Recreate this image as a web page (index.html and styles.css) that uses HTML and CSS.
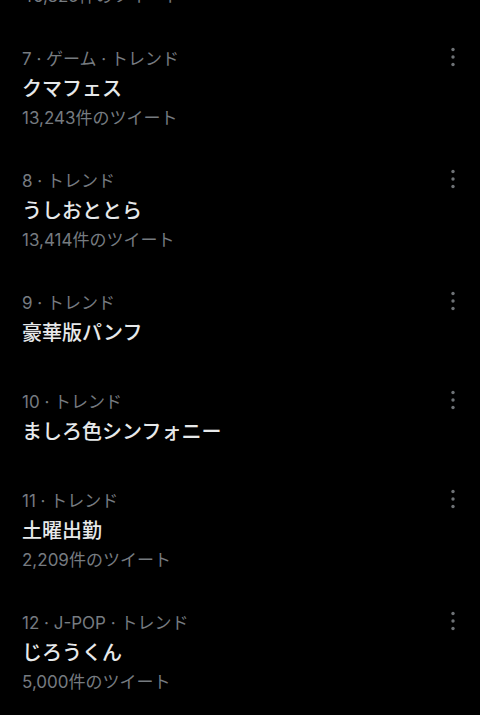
FILE: index.html
```html
<!DOCTYPE html>
<html lang="ja">
<head>
<meta charset="utf-8">
<link rel="stylesheet" href="styles.css">
</head>
<body>
<main class="list">
  <section class="trend">
    <div class="meta"><span>6 · トレンド</span><span class="more"></span></div>
    <div class="title">コミケ</div>
    <div class="count">46,825件のツイート</div>
  </section>
  <section class="trend">
    <div class="meta"><span>7 · ゲーム · トレンド</span><svg class="more" viewBox="0 0 20 20" width="20" height="20"><circle cx="10" cy="2.5" r="1.7"/><circle cx="10" cy="10" r="1.7"/><circle cx="10" cy="17.5" r="1.7"/></svg></div>
    <div class="title">クマフェス</div>
    <div class="count">13,243件のツイート</div>
  </section>
  <section class="trend">
    <div class="meta"><span>8 · トレンド</span><svg class="more" viewBox="0 0 20 20" width="20" height="20"><circle cx="10" cy="2.5" r="1.7"/><circle cx="10" cy="10" r="1.7"/><circle cx="10" cy="17.5" r="1.7"/></svg></div>
    <div class="title">うしおととら</div>
    <div class="count">13,414件のツイート</div>
  </section>
  <section class="trend trend-short">
    <div class="meta"><span>9 · トレンド</span><svg class="more" viewBox="0 0 20 20" width="20" height="20"><circle cx="10" cy="2.5" r="1.7"/><circle cx="10" cy="10" r="1.7"/><circle cx="10" cy="17.5" r="1.7"/></svg></div>
    <div class="title">豪華版パンフ</div>
  </section>
  <section class="trend trend-short">
    <div class="meta"><span>10 · トレンド</span><svg class="more" viewBox="0 0 20 20" width="20" height="20"><circle cx="10" cy="2.5" r="1.7"/><circle cx="10" cy="10" r="1.7"/><circle cx="10" cy="17.5" r="1.7"/></svg></div>
    <div class="title">ましろ色シンフォニー</div>
  </section>
  <section class="trend">
    <div class="meta"><span>11 · トレンド</span><svg class="more" viewBox="0 0 20 20" width="20" height="20"><circle cx="10" cy="2.5" r="1.7"/><circle cx="10" cy="10" r="1.7"/><circle cx="10" cy="17.5" r="1.7"/></svg></div>
    <div class="title">土曜出勤</div>
    <div class="count">2,209件のツイート</div>
  </section>
  <section class="trend">
    <div class="meta"><span>12 · J-POP · トレンド</span><svg class="more" viewBox="0 0 20 20" width="20" height="20"><circle cx="10" cy="2.5" r="1.7"/><circle cx="10" cy="10" r="1.7"/><circle cx="10" cy="17.5" r="1.7"/></svg></div>
    <div class="title">じろうくん</div>
    <div class="count">5,000件のツイート</div>
  </section>
</main>
</body>
</html>
```
FILE: styles.css
```css
html, body {
  margin: 0;
  padding: 0;
  background: #000;
}
body {
  width: 480px;
  height: 715px;
  overflow: hidden;
  font-family: "Noto Sans CJK JP", "Noto Sans", sans-serif;
}
.list {
  margin-top: -95px;
  display: flex;
  flex-direction: column;
}
.trend {
  padding: 15px 17px 15px 22px;
}
.trend-short {
  padding-bottom: 23px;
}
.meta {
  display: flex;
  justify-content: space-between;
  align-items: center;
  height: 30px;
  font-family: "Inter", "Noto Sans CJK JP", sans-serif;
  font-size: 17px;
  color: #767b80;
}
.more {
  fill: #6e7276;
  width: 20px;
  height: 20px;
}
.title {
  height: 31px;
  line-height: 31px;
  font-size: 20px;
  font-weight: 500;
  color: #e7e9ea;
}
.count {
  height: 31px;
  line-height: 31px;
  font-family: "Inter", "Noto Sans CJK JP", sans-serif;
  font-size: 17px;
  color: #767b80;
}
```
